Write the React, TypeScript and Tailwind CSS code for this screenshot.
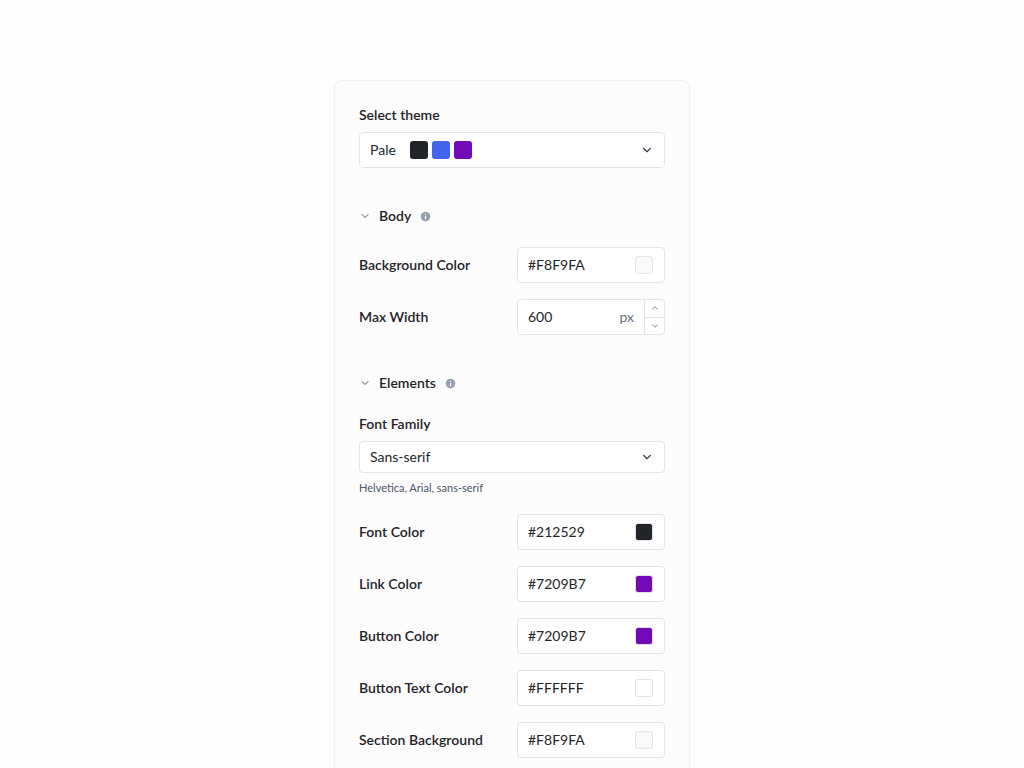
import { ChevronDown, ChevronUp, Info } from 'lucide-react'

const FONT = { fontFamily: 'Lato, "Noto Sans", sans-serif' }

function ColorRow({ label, value, swatch }: { label: string; value: string; swatch: string }) {
  return (
    <div className="flex h-9 items-center justify-between">
      <span className="text-sm font-semibold text-[#1f2328]">{label}</span>
      <div className="flex h-9 w-[148px] items-center justify-between rounded border border-[#e3e4e8] bg-white pl-[10px] pr-[11px]">
        <span className="text-sm text-[#212529]">{value}</span>
        <span className="h-[18px] w-[18px] rounded-[3px] border border-[#e3e4e8]" style={{ background: swatch }} />
      </div>
    </div>
  )
}

function SectionHead({ title }: { title: string }) {
  return (
    <div className="flex items-center gap-2 text-sm font-semibold text-[#1f2328]">
      <ChevronDown size={12} className="text-gray-600" />
      <span>{title}</span>
      <Info size={13} className="fill-gray-400 text-white" />
    </div>
  )
}

export default function App() {
  return (
    <div className="min-h-screen bg-[#fdfdfd] pt-20" style={FONT}>
      <div className="mx-auto w-[356px] rounded-lg border border-[#eeeff2] bg-[#fcfcfc] px-6 pt-6 pb-6">
        <div className="text-sm font-semibold text-[#1f2328]">Select theme</div>
        <div className="mt-[7px] flex h-9 items-center justify-between rounded border border-[#e3e4e8] bg-white px-[10px]">
          <div className="flex items-center gap-1">
            <span className="mr-[10px] text-sm text-[#212529]">Pale</span>
            <span className="h-[18px] w-[18px] rounded-[3px] bg-[#212529]" />
            <span className="h-[18px] w-[18px] rounded-[3px] bg-[#4263eb]" />
            <span className="h-[18px] w-[18px] rounded-[3px] bg-[#7209b7]" />
          </div>
          <ChevronDown size={14} className="text-gray-700" />
        </div>

        <div className="mt-[38px]"><SectionHead title="Body" /></div>
        <div className="mt-[21px] flex flex-col gap-4">
          <ColorRow label="Background Color" value="#F8F9FA" swatch="#F8F9FA" />
          <div className="flex h-9 items-center justify-between">
            <span className="text-sm font-semibold text-[#1f2328]">Max Width</span>
            <div className="flex h-9 w-[148px] items-center rounded border border-[#e3e4e8] bg-white">
              <span className="flex-1 pl-[10px] text-sm text-[#212529]">600</span>
              <span className="pr-[10px] text-sm text-gray-500">px</span>
              <div className="flex h-full w-5 flex-col border-l border-[#e3e4e8]">
                <div className="flex flex-1 items-center justify-center border-b border-[#e3e4e8]"><ChevronUp size={10} className="text-gray-500" /></div>
                <div className="flex flex-1 items-center justify-center"><ChevronDown size={10} className="text-gray-500" /></div>
              </div>
            </div>
          </div>
        </div>

        <div className="mt-[38px]"><SectionHead title="Elements" /></div>
        <div className="mt-[21px] text-sm font-semibold text-[#1f2328]">Font Family</div>
        <div className="mt-[7px] flex h-8 items-center justify-between rounded border border-[#e3e4e8] bg-white px-[10px]">
          <span className="text-sm text-[#212529]">Sans-serif</span>
          <ChevronDown size={14} className="text-gray-700" />
        </div>
        <div className="mt-[7px] text-[11px] text-gray-600">Helvetica, Arial, sans-serif</div>
        <div className="mt-[17px] flex flex-col gap-4">
          <ColorRow label="Font Color" value="#212529" swatch="#212529" />
          <ColorRow label="Link Color" value="#7209B7" swatch="#7209B7" />
          <ColorRow label="Button Color" value="#7209B7" swatch="#7209B7" />
          <ColorRow label="Button Text Color" value="#FFFFFF" swatch="#FFFFFF" />
          <ColorRow label="Section Background" value="#F8F9FA" swatch="#F8F9FA" />
        </div>
      </div>
    </div>
  )
}
